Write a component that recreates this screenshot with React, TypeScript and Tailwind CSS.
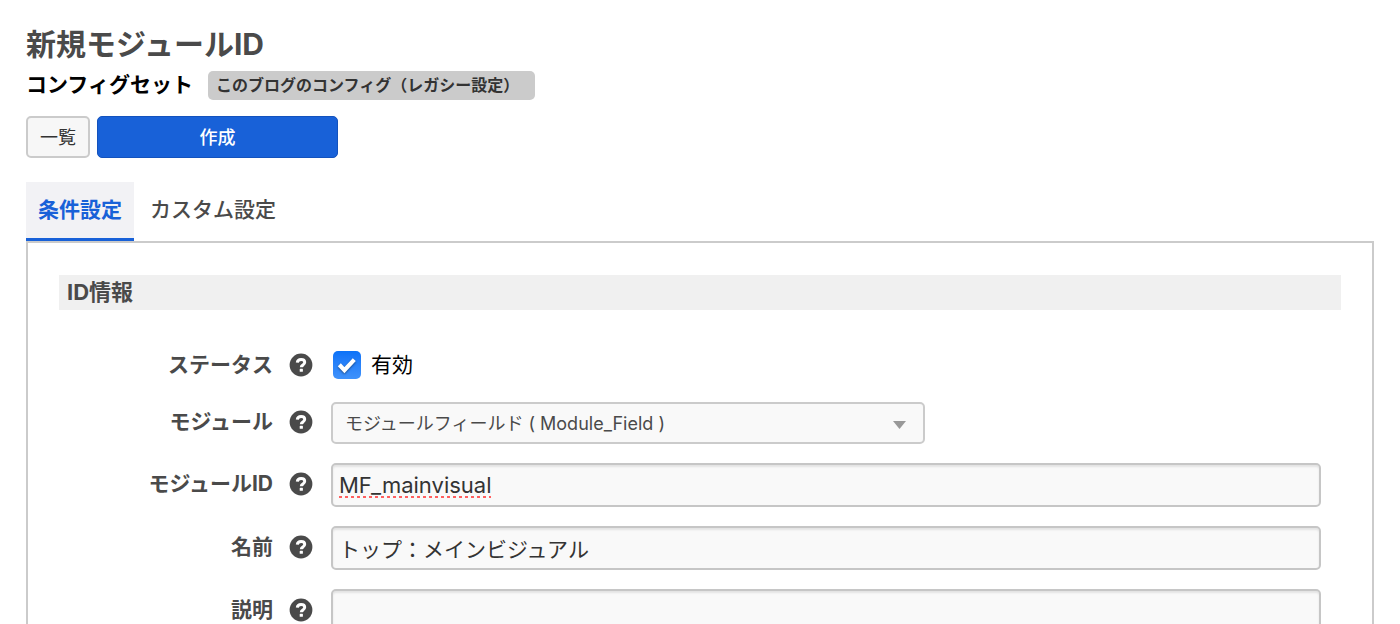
import { useId, useState, type ReactNode } from 'react';

function HelpIcon() {
  return (
    <svg viewBox="0 0 24 24" className="block size-6" aria-hidden="true">
      <circle cx="12" cy="12" r="11.4" fill="#4a4a4a" />
      <path
        d="M8.3 9.6C8.5 7.5 10 6.4 12.1 6.4c2.2 0 3.6 1.1 3.6 2.9 0 1.4-.8 2.1-1.8 2.8-1.1.7-1.6 1-1.6 2.2"
        fill="none"
        stroke="#fff"
        strokeWidth="3"
      />
      <rect x="10.7" y="15.8" width="3.2" height="3" rx="0.6" fill="#fff" />
    </svg>
  );
}

interface RowProps {
  label: string;
  htmlFor: string;
  children: ReactNode;
}

function Row({ label, htmlFor, children }: RowProps) {
  return (
    <div className="flex items-center">
      <div className="flex w-[272px] shrink-0 items-center justify-end gap-4 pr-[18px] pb-0.5">
        <label htmlFor={htmlFor} className="text-[21px] leading-8 font-bold whitespace-nowrap text-[#4a4a4a]">
          {label}
        </label>
        <button type="button" aria-label={`${label}のヘルプ`} className="shrink-0">
          <HelpIcon />
        </button>
      </div>
      {children}
    </div>
  );
}

const inputClass =
  'block h-11 min-w-0 flex-1 rounded-[5px] border-2 border-[#c6c6c6] bg-[#f9f9f9] px-1.5 leading-10 text-[#333] shadow-[inset_0_2px_2px_rgba(0,0,0,0.09)] outline-none';

export default function App() {
  const id = useId();
  const [enabled, setEnabled] = useState(true);
  const [moduleId, setModuleId] = useState('MF_mainvisual');
  const [name, setName] = useState('トップ：メインビジュアル');

  return (
    <main className="flex h-screen flex-col overflow-hidden bg-white px-[26px] pt-6 font-['Inter','Noto_Sans_CJK_JP',sans-serif] text-black">
      <h1 className="text-[30px] leading-10 font-bold text-[#4a4a4a]">新規モジュールID</h1>
      <div className="mt-[7px] flex items-start gap-[15px]">
        <h2 className="text-[21px] leading-[27px] font-bold">コンフィグセット</h2>
        <span className="rounded-[5px] bg-[#cbcbcb] pr-4 pl-2 text-[16px] leading-[29px] font-bold text-[#333]">
          このブログのコンフィグ（レガシー設定）
        </span>
      </div>
      <div className="mt-4 flex gap-[7px]">
        <a
          href="#list"
          className="flex h-[42px] w-16 items-center justify-center rounded-[5px] border-2 border-[#cbcbcb] bg-[#f7f7f7] text-[18px] text-[#333]"
        >
          一覧
        </a>
        <button
          type="button"
          className="h-[42px] w-[241px] rounded-[5px] border border-[#1352bd] bg-[#1861d8] text-[18px] font-medium text-white"
        >
          作成
        </button>
      </div>

      <div role="tablist" className="mt-6 flex text-[21px]">
        <button
          type="button"
          role="tab"
          aria-selected="true"
          className="h-[59px] border-b-[3px] border-[#1861d8] bg-[#f2f2f5] px-3 font-bold text-[#1861d8]"
        >
          条件設定
        </button>
        <button
          type="button"
          role="tab"
          aria-selected="false"
          className="h-[59px] border-b-[3px] border-transparent px-4 font-medium text-[#4a4a4a]"
        >
          カスタム設定
        </button>
      </div>

      <section className="flex-1 border-2 border-b-0 border-[#cbcbcb] px-[31px] pt-8">
        <h2 className="bg-[#f0f0f0] px-2 text-[22px] leading-[35px] font-bold text-[#4a4a4a]">ID情報</h2>
        <div className="mt-[38px] flex flex-col gap-[19px] pr-5">
          <Row label="ステータス" htmlFor={`${id}-status`}>
            <label className="flex items-center gap-2.5 pb-0.5 pl-0.5 text-[21px] leading-[33px]">
              <span className="grid size-7 place-items-center">
                <input
                  id={`${id}-status`}
                  type="checkbox"
                  checked={enabled}
                  onChange={(e) => setEnabled(e.target.checked)}
                  className="peer col-start-1 row-start-1 size-7 appearance-none rounded-[5px] border border-[#c6c6c6] bg-white checked:border-0 checked:bg-linear-to-b checked:from-[#0a72f8] checked:to-[#3f92fb]"
                />
                <svg
                  viewBox="0 0 28 28"
                  className="pointer-events-none invisible col-start-1 row-start-1 size-7 drop-shadow-[0_1px_1px_rgba(0,0,0,0.45)] peer-checked:visible"
                  aria-hidden="true"
                >
                  <path d="M6.3 13.8l5.1 5.3L21.3 8.6" fill="none" stroke="#fff" strokeWidth="4.2" />
                </svg>
              </span>
              有効
            </label>
          </Row>
          <Row label="モジュール" htmlFor={`${id}-module`}>
            <div className="grid w-[594px] items-center">
              <select
                id={`${id}-module`}
                className="col-start-1 row-start-1 h-[42px] w-full appearance-none rounded-[5px] border-2 border-[#cbcbcb] bg-[#f9f9f9] px-3 text-[18px] text-[#4a4a4a]"
              >
                <option>モジュールフィールド ( Module_Field )</option>
              </select>
              <svg
                viewBox="0 0 13 8"
                className="pointer-events-none col-start-1 row-start-1 mt-1 mr-[19px] h-2 w-[13px] justify-self-end"
                aria-hidden="true"
              >
                <path d="M0 0h13L6.5 8z" fill="#999" />
              </svg>
            </div>
          </Row>
          <Row label="モジュールID" htmlFor={`${id}-mid`}>
            <input
              id={`${id}-mid`}
              value={moduleId}
              spellCheck={false}
              onChange={(e) => setModuleId(e.target.value)}
              className={`${inputClass} text-[22px] underline decoration-[#ff5f5f] decoration-dotted decoration-[3px] underline-offset-[3px] [text-decoration-skip-ink:none]`}
            />
          </Row>
          <Row label="名前" htmlFor={`${id}-name`}>
            <input
              id={`${id}-name`}
              value={name}
              onChange={(e) => setName(e.target.value)}
              className={`${inputClass} text-[21px]`}
            />
          </Row>
          <Row label="説明" htmlFor={`${id}-desc`}>
            <input id={`${id}-desc`} className={`${inputClass} text-[21px]`} />
          </Row>
        </div>
      </section>
    </main>
  );
}
